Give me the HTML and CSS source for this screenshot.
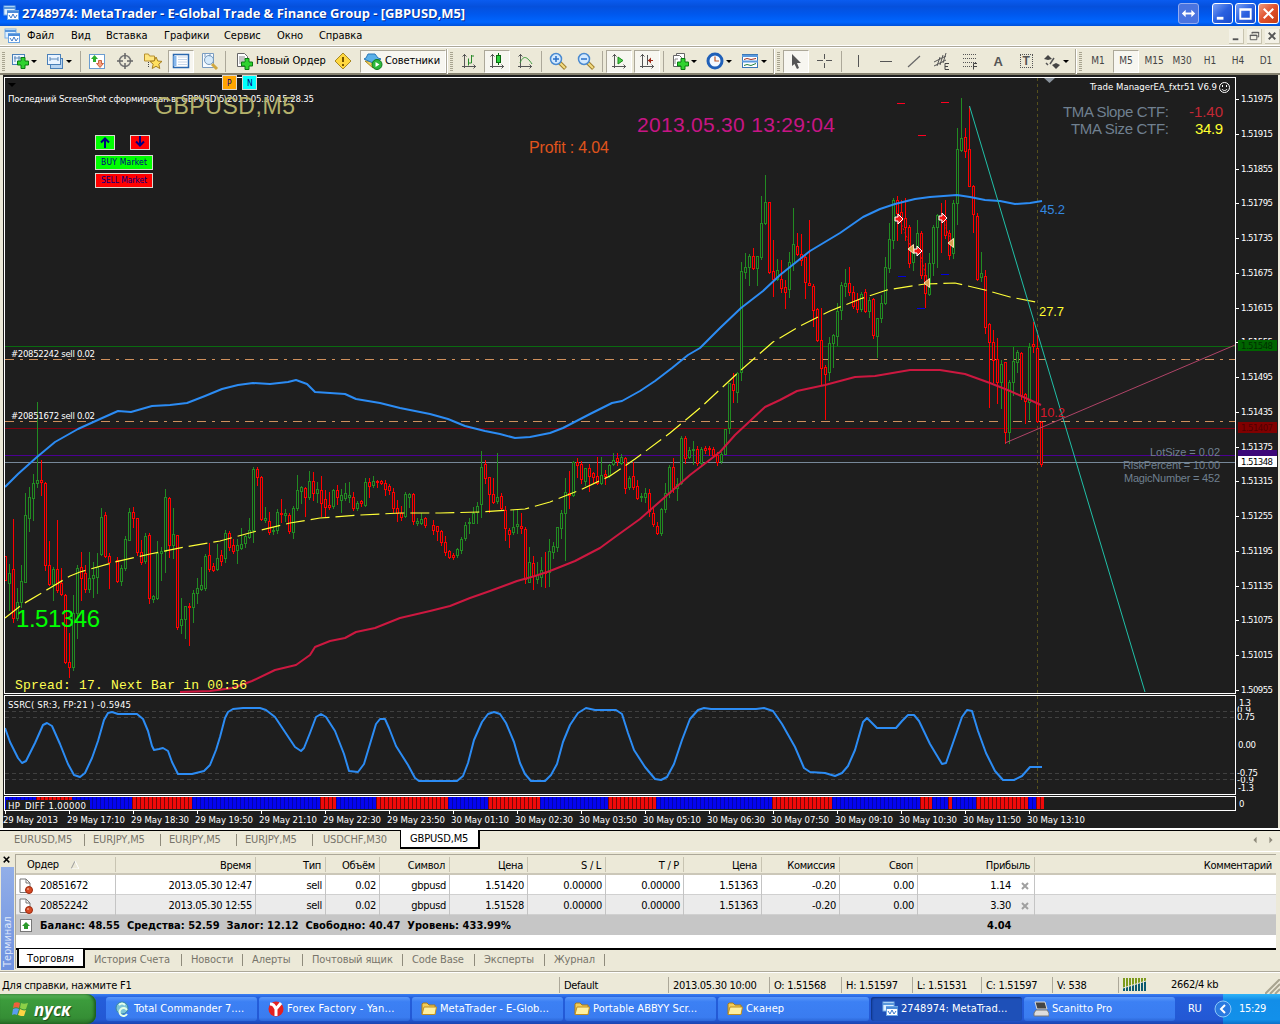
FILE: index.html
```html
<!DOCTYPE html>
<html lang="ru">
<head>
    <meta charset="UTF-8">
    <title>2748974: MetaTrader - E-Global Trade &amp; Finance Group - [GBPUSD,M5]</title>
    <link rel="stylesheet" href="styles.css">
</head>
<body>
    <svg class="defs">
        <symbol id="app" viewBox="0 0 16 16">
            <rect x="1" y="1" width="11" height="9" fill="#dff0ff" stroke="#7ab0e8"/>
            <path d="M1 3h11" stroke="#5a98dc" stroke-width="2"/>
            <rect x="4.500" y="5.500" width="11" height="9" fill="#fff" stroke="#6aa4e4"/>
            <path d="M4 7h12" stroke="#4c8cd8" stroke-width="2"/>
            <path d="M6 10l2 3 2-4 2 4 2-3" fill="none" stroke="#3a78c8"/>
        </symbol>
        <symbol id="plus" viewBox="0 0 12 12">
            <path d="M4 .5h4V4h3.500v4H8v3.500H4V8H.5V4H4z" fill="#2fd22f" stroke="#0a7a12"/>
        </symbol>
        <symbol id="folder" viewBox="0 0 16 14">
            <path d="M1 12V2l1-1h4l2 2h6v9z" fill="#f2cc58" stroke="#a87a18"/>
            <path d="M1 12.500L3 5h12.500l-1.500 7.500z" fill="#fff0a0" stroke="#c09020"/>
        </symbol>
        <symbol id="sheet" viewBox="0 0 14 16">
            <path d="M1 1h6l4 4v9.500H1z" fill="#fff" stroke="#777"/>
            <path d="M7 1v4h4" fill="none" stroke="#777"/>
            <circle cx="10" cy="12" r="3.500" fill="#d84a24" stroke="#9a2a10"/>
            <circle cx="9" cy="11" r="1" fill="#f6a080"/>
        </symbol>
        <symbol id="lens" viewBox="0 0 20 20">
            <path d="M11.500 11.500l6 6" stroke="#a08030" stroke-width="4"/>
            <path d="M12 12l5 5" stroke="#f4dc80" stroke-width="2"/>
            <circle cx="8" cy="8" r="5.500" fill="#d4eaff" stroke="#4a8ad0" stroke-width="1.500"/>
        </symbol>
        <symbol id="axes" viewBox="0 0 16 16">
            <path d="M3.500 1v14M1 13.500h14M1.500 3.500l2-2 2 2M12.500 11.500l2 2-2 2" fill="none" stroke="#555"/>
        </symbol>
    </svg>

    <header class="titlebar">
        <svg class="ico16"><use href="#app"/></svg>
        <span class="title">2748974: MetaTrader - E-Global Trade &amp; Finance Group - [GBPUSD,M5]</span>
        <span class="winbtn wide"><svg viewBox="0 0 20 20"><path d="M5 10h10" stroke="#fff" stroke-width="2"/><path d="M3 10l4-4v8zM17 10l-4-4v8z" fill="#fff"/></svg></span>
        <span class="winbtn"><svg viewBox="0 0 20 20"><path d="M4 15h7" stroke="#fff" stroke-width="3"/></svg></span>
        <span class="winbtn"><svg viewBox="0 0 20 20"><path d="M4.500 5.500h11v10h-11zM4 6h12" fill="none" stroke="#fff" stroke-width="2"/></svg></span>
        <span class="winbtn close"><svg viewBox="0 0 20 20"><path d="M5 5l10 10M15 5L5 15" stroke="#fff" stroke-width="2.200"/></svg></span>
    </header>

    <nav class="menubar">
        <svg class="ico16"><use href="#app"/></svg>
        <span class="m1">Файл</span><span class="m2">Вид</span><span class="m3">Вставка</span><span class="m4">Графики</span><span class="m5">Сервис</span><span class="m6">Окно</span><span class="m7">Справка</span>
        <div class="mdi">
            <span><svg viewBox="0 0 15 15"><path d="M4 11h6" stroke="#555" stroke-width="2"/></svg></span>
            <span><svg viewBox="0 0 15 15"><path d="M5.500 5V3.500h7v5H11M3.500 6.500h7v5h-7zM3 7h8M5 4h8" fill="none" stroke="#555"/></svg></span>
            <span><svg viewBox="0 0 15 15"><path d="M4 4l7 7M11 4l-7 7" stroke="#555" stroke-width="2"/></svg></span>
        </div>
    </nav>

    <div class="toolbar">
        <i class="grip first"></i>
        <span class="drop"><svg viewBox="0 0 20 20"><rect x="2.500" y="3.500" width="12" height="10" fill="#eaf4ff" stroke="#4a80b8"/><path d="M5 5v6M4 7h7M9 5v6" stroke="#5a88b8"/><use href="#plus" x="7" y="6" width="12" height="12"/></svg></span>
        <span class="drop"><svg viewBox="0 0 20 20"><rect x="5.500" y="7.500" width="12" height="10" fill="#b8d4f0" stroke="#4a80b8"/><rect x="2.500" y="3.500" width="13" height="10" fill="#eaf4ff" stroke="#4a80b8"/><path d="M5 8h8M5 6v4M13 6v4" stroke="#5a88b8"/></svg></span>
        <i class="sep"></i>
        <span class="btn"><svg viewBox="0 0 20 20"><rect x="2.500" y="3.500" width="15" height="14" fill="#fff" stroke="#6a9cd0"/><path d="M7.500 4l3.500 4H9v3H6V8H4z" fill="#2cae2c"/><path d="M13 16.500l-3.500-4h2v-3h3v3h2z" fill="#f8a080" stroke="#c04a20" stroke-width=".8"/></svg></span>
        <span class="btn"><svg viewBox="0 0 20 20"><circle cx="10" cy="10" r="5.500" fill="none" stroke="#777" stroke-width="1.500"/><path d="M10 2v6M10 12v6M2 10h6M12 10h6" stroke="#666" stroke-width="1.500"/></svg></span>
        <span class="btn"><svg viewBox="0 0 20 20"><path d="M1.500 10V3h4l1 2h5v5z" fill="#ffe680" stroke="#b89030"/><path d="M5.500 11v6" stroke="#444" stroke-dasharray="1 1"/><path d="M13 6l1.800 4 4.200.4-3.200 2.800 1 4.300-3.800-2.200-3.800 2.200 1-4.300L7 10.400l4.200-.4z" fill="#ffe060" stroke="#a88020"/></svg></span>
        <span class="btn on"><svg viewBox="0 0 20 20"><rect x="2.500" y="3.500" width="15" height="13" fill="#fff" stroke="#2a68b0" stroke-width="1.500"/><path d="M4 5v10" stroke="#88b8ec" stroke-width="3"/><path d="M7 6h9M7 8.500h9M7 11h9M7 13.500h9" stroke="#c4d4e8"/></svg></span>
        <span class="btn"><svg viewBox="0 0 20 20"><path d="M3.500 2.500h11v14h-11zM6 2v4M11 2v4" fill="#f6fbff" stroke="#7a9cc0"/><path d="M13 13l5 5" stroke="#d0a840" stroke-width="3"/><circle cx="10" cy="9" r="4.500" fill="#c8e2fa" fill-opacity=".7" stroke="#7898b8"/></svg></span>
        <i class="sep"></i>
        <span class="btn order"><svg viewBox="0 0 20 20"><path d="M3.500 2.500h7l3 3v10h-10z" fill="#fff" stroke="#666"/><path d="M5 6h6M5 8h6M5 10h5M5 12h3" stroke="#888"/><use href="#plus" x="7" y="7" width="12" height="12"/></svg>Новый Ордер</span>
        <span class="btn"><svg viewBox="0 0 20 20"><path d="M10 2l8 8-8 8-8-8z" fill="#ffd840" stroke="#a88820"/><path d="M10 6v5M10 13v2" stroke="#775500" stroke-width="2"/></svg></span>
        <span class="btn on experts"><svg viewBox="0 0 20 20"><path d="M2 10l8 7 7-6z" fill="#f0d060" stroke="#a88820"/><path d="M1 8l2-1 2-4h7l3 4 3 1-8 4z" fill="#5ab0e8" stroke="#2a78b8"/><circle cx="14" cy="13.500" r="5" fill="#2cb83c" stroke="#0e7a1c"/><path d="M12.500 11l4 2.500-4 2.500z" fill="#fff"/></svg>Советники</span>
        <i class="edge"></i><i class="grip"></i>
        <span class="btn"><svg viewBox="0 0 20 20"><use href="#axes" x="2" y="2" width="16" height="16"/><path d="M9.500 7.500v7M12.500 4v8M12 5h3M9.500 12h3" stroke="#2a8a2a"/></svg></span>
        <span class="btn on"><svg viewBox="0 0 20 20"><use href="#axes" x="2" y="2" width="16" height="16"/><path d="M11.500 2v12" stroke="#0a6a10"/><rect x="9.500" y="4.500" width="4" height="7" fill="#2cd03c" stroke="#0a6a10"/></svg></span>
        <span class="btn"><svg viewBox="0 0 20 20"><use href="#axes" x="2" y="2" width="16" height="16"/><path d="M5 12c3-7 6-8 12 1" fill="none" stroke="#3a9a3a"/></svg></span>
        <i class="sep"></i>
        <span class="btn"><svg viewBox="0 0 20 20"><use href="#lens" width="20" height="20"/><path d="M5 8h6M8 5v6" stroke="#2a70c8" stroke-width="1.500"/></svg></span>
        <span class="btn"><svg viewBox="0 0 20 20"><use href="#lens" width="20" height="20"/><path d="M5 8h6" stroke="#2a70c8" stroke-width="1.500"/></svg></span>
        <i class="sep"></i>
        <span class="btn on"><svg viewBox="0 0 20 20"><use href="#axes" x="2" y="2" width="16" height="16"/><path d="M9 6l5 3.500L9 13z" fill="#4cd04c" stroke="#1a8a1a"/></svg></span>
        <span class="btn on"><svg viewBox="0 0 20 20"><use href="#axes" x="2" y="2" width="16" height="16"/><path d="M10.500 4v10" stroke="#555"/><path d="M11 9.500h5" stroke="#a02818"/><path d="M11 9.500l3-3v6z" fill="#a02818"/></svg></span>
        <i class="sep wider"></i>
        <span class="drop"><svg viewBox="0 0 20 20"><path d="M6.500 2.500h8v12h-8z" fill="#fff" stroke="#666"/><path d="M3.500 4.500h6l2 2v9h-8z" fill="#fff" stroke="#666"/><path d="M5 13V8h3" fill="none" stroke="#888"/><use href="#plus" x="7" y="7" width="12" height="12"/></svg></span>
        <span class="drop"><svg viewBox="0 0 20 20"><circle cx="10" cy="10" r="7" fill="#f4faff" stroke="#2060b8" stroke-width="3"/><path d="M10 5.500V10h4" fill="none" stroke="#c05828" stroke-width="1.200"/></svg></span>
        <span class="drop"><svg viewBox="0 0 20 20"><rect x="2.500" y="3.500" width="15" height="13" fill="#fff" stroke="#3a78b8"/><path d="M2 5h16M2 10.500h16" stroke="#5a9ade" stroke-width="2"/><path d="M4 8.500l3-1 4 1 5-1" fill="none" stroke="#a03020"/><path d="M4 14.500l3-1 4 1 5-2" fill="none" stroke="#208040"/></svg></span>
        <i class="edge"></i><i class="grip"></i>
        <span class="btn on"><svg viewBox="0 0 20 20"><path d="M6 3l9 9h-4l2 5-2 1-2.500-5L6 15z" fill="#555"/></svg></span>
        <span class="btn"><svg viewBox="0 0 20 20"><path d="M10.500 3v5M10.500 12v5M3 9.500h6M12 9.500h6" stroke="#555"/></svg></span>
        <i class="sep wide6"></i>
        <span class="btn"><svg viewBox="0 0 20 20"><path d="M10.500 4v12" stroke="#555"/></svg></span>
        <span class="btn"><svg viewBox="0 0 20 20"><path d="M4 10.500h12" stroke="#555"/></svg></span>
        <span class="btn"><svg viewBox="0 0 20 20"><path d="M4 16L16 5" stroke="#666" stroke-width="1.200"/></svg></span>
        <span class="btn"><svg viewBox="0 0 20 20"><path d="M2 11l12-6M2 15l12-6M5 15l3-9M8 14l3-10M11 12l3-10" stroke="#555"/><path d="M17 12.500h-4v6h4M13 15.500h3" fill="none" stroke="#444"/></svg></span>
        <span class="btn"><svg viewBox="0 0 20 20"><path d="M3 3.500h14M3 7.500h14M3 11.500h14M3 15.500h9" stroke="#555" stroke-dasharray="1 1"/><path d="M17 12.500h-3.500v6M14 15.500h3" fill="none" stroke="#444"/></svg></span>
        <span class="btn letter">A</span>
        <span class="btn letter"><b class="tbox">T</b></span>
        <span class="drop shapes"><svg viewBox="0 0 20 20"><path d="M2 8l4-4 4 4-4 1zM10 14l4-2 4 2-4 4z" fill="#444"/><path d="M4 12l2 2M12 7l-4 6" stroke="#555" stroke-width="1.500"/></svg></span>
        <i class="edge"></i><i class="grip"></i>
        <span class="btn tf">M1</span><span class="btn tf on">M5</span><span class="btn tf">M15</span><span class="btn tf">M30</span><span class="btn tf">H1</span><span class="btn tf">H4</span><span class="btn tf">D1</span>
    </div>

    <main class="chart">
        <svg id="chart" viewBox="3 75 1275 753" width="1275" height="753">
            <g id="levels"></g>
            <g id="candles"></g>
            <g id="curves"></g>
            <g id="markers"></g>
            <g id="hist"></g>
            <g class="frame">
                <path d="M4.500 693.500V77.500H1235.500V693.500zM4.500 794.500V695.500H1235.500V794.500zM4.500 810.500V796.500H1235.500V810.500z"/>
            </g>
            <path d="M1044 78h11l-5.500 5z" fill="#8a939c"/>
            <path d="M8 83h8l-4 4z" fill="#000"/>
            <g id="axis"></g>

            <text class="small" x="8" y="102" textLength="306">Последний ScreenShot сформирован в: GBPUSD\5\2013.05.30 15.28.35</text>
            <text class="arial symbol" x="155" y="114" textLength="140">GBPUSD,M5</text>
            <text class="arial clock" x="637" y="132" textLength="198">2013.05.30 13:29:04</text>
            <text class="arial profit" x="529" y="153" textLength="80">Profit : 4.04</text>
            <text class="arial price" x="16" y="627" textLength="84">1.51346</text>
            <text class="mono" x="15" y="689" textLength="232">Spread: 17. Next Bar in 00:56</text>
            <text class="small" x="11" y="357" textLength="84">#20852242 sell 0.02</text>
            <text class="small" x="11" y="419" textLength="84">#20851672 sell 0.02</text>
            <text class="small" x="1090" y="90" textLength="127">Trade ManagerEA_fxtr51 V6.9</text>
            <g fill="none" stroke="#fff"><circle cx="1224.500" cy="87.500" r="5"/><path d="M1222 89c1 2 4 2 5 0M1222.500 85v2M1226.500 85v2"/></g>
            <text class="arial tma" x="1063" y="117" textLength="106">TMA Slope CTF:</text>
            <text class="arial tma" x="1071" y="134" textLength="98">TMA Size CTF:</text>
            <text class="arial tma neg" x="1189" y="117" textLength="34">-1.40</text>
            <text class="arial tma pos" x="1195" y="134" textLength="28">34.9</text>
            <text class="arial band blue" x="1040" y="214" textLength="25">45.2</text>
            <text class="arial band yellow" x="1039" y="316" textLength="25">27.7</text>
            <text class="arial band red" x="1040" y="417" textLength="25">10.2</text>
            <text class="arial info" x="1150" y="456" textLength="70">LotSize = 0.02</text>
            <text class="arial info" x="1123" y="469" textLength="97">RiskPercent = 10.00</text>
            <text class="arial info" x="1124" y="482" textLength="96">MagicNumber = 452</text>
            <text class="small" x="8" y="708" textLength="123">SSRC( SR:3, FP:21 ) -0.5945</text>
            <rect x="6" y="800" width="84" height="10" fill="#1e1e1e"/>
            <text class="small" x="8" y="809" textLength="78">HP_DIFF 1.00000</text>

            <!-- trade buttons -->
            <g class="pad">
                <rect x="222.500" y="75.500" width="14" height="14" fill="#ffa500"/><text x="227" y="86">P</text>
                <rect x="242.500" y="75.500" width="14" height="14" fill="#00ffff"/><text x="247" y="86">N</text>
                <rect x="95.500" y="135.500" width="19" height="14" fill="#00ff00"/>
                <rect x="130.500" y="135.500" width="19" height="14" fill="#ff0000"/>
                <path d="M105 148v-9M101 142.500l4-4 4 4M140 136v9M136 141.500l4 4 4-4"/>
                <rect x="95.500" y="155.500" width="57" height="14" fill="#00ff00"/><text x="101" y="165" textLength="46">BUY Market</text>
                <rect x="95.500" y="173.500" width="57" height="14" fill="#ff0000"/><text x="101" y="183" textLength="46">SELL Market</text>
            </g>
        </svg>
    </main>

    <div class="charttabs">
        <span>EURUSD,M5</span><span>EURJPY,M5</span><span>EURJPY,M5</span><span>EURJPY,M5</span><span class="last">USDCHF,M30</span><span class="active">GBPUSD,M5</span>
        <svg class="scroll" viewBox="0 0 24 10"><path d="M4 1v8L0 5zM20 1v8l4-4z" fill="#8f8b7c"/></svg>
    </div>

    <section class="terminal">
        <aside>
            <svg viewBox="0 0 14 14"><path d="M4 3l6 6M10 3l-6 6" stroke="#000" stroke-width="1.600"/></svg>
            <div class="side"><span>Терминал</span></div>
        </aside>
        <div class="panel">
            <div class="row head">
                <span class="id">Ордер <svg viewBox="0 0 8 8"><path d="M0 8L4 0" stroke="#999"/><path d="M4 0l4 8H0" fill="none" stroke="#fff"/></svg></span><span>Время</span><span>Тип</span><span>Объём</span><span>Символ</span><span>Цена</span><span>S / L</span><span>T / P</span><span>Цена</span><span>Комиссия</span><span>Своп</span><span>Прибыль</span><span>Комментарий</span>
            </div>
            <div class="row">
                <span class="id"><svg><use href="#sheet"/></svg>20851672</span><span>2013.05.30 12:47</span><span>sell</span><span>0.02</span><span>gbpusd</span><span>1.51420</span><span>0.00000</span><span>0.00000</span><span>1.51363</span><span>-0.20</span><span>0.00</span><span class="gain">1.14<svg viewBox="0 0 8 8"><path d="M1 1l6 6M7 1L1 7"/></svg></span><span></span>
            </div>
            <div class="row alt">
                <span class="id"><svg><use href="#sheet"/></svg>20852242</span><span>2013.05.30 12:55</span><span>sell</span><span>0.02</span><span>gbpusd</span><span>1.51528</span><span>0.00000</span><span>0.00000</span><span>1.51363</span><span>-0.20</span><span>0.00</span><span class="gain">3.30<svg viewBox="0 0 8 8"><path d="M1 1l6 6M7 1L1 7"/></svg></span><span></span>
            </div>
            <div class="total">
                <svg viewBox="0 0 14 16"><rect x="1.500" y="1.500" width="11" height="12" fill="#fff" stroke="#777"/><path d="M7 4l4 4H9v3H5V8H3z" fill="#2a9a2a"/></svg>
                <b class="sum">Баланс: 48.55&nbsp; Средства: 52.59&nbsp; Залог: 12.12&nbsp; Свободно: 40.47&nbsp; Уровень: 433.99%</b>
                <b class="result">4.04</b>
            </div>
            <div class="tabs">
                <span class="active">Торговля</span><span class="w1">История Счета</span><span class="w2">Новости</span><span class="w3">Алерты</span><span class="w4">Почтовый ящик</span><span class="w5">Code Base</span><span class="w6">Эксперты</span><span class="w7">Журнал</span>
            </div>
        </div>
    </section>

    <footer class="status">
        <span class="help">Для справки, нажмите F1</span><span class="s1">Default</span><span class="s2">2013.05.30 10:00</span><span class="s3">O: 1.51568</span><span class="s4">H: 1.51597</span><span class="s5">L: 1.51531</span><span class="s6">C: 1.51597</span><span class="s7">V: 538</span>
        <span class="net"><svg viewBox="0 0 24 13"><path d="M0 6h24" stroke="#7c9a1c" stroke-width="12" stroke-dasharray="2 1"/><path d="M0 13V10L23 3v10z" fill="#0c5a70"/><path d="M2.500 0v13M5.500 0v13M8.500 0v13M11.500 0v13M14.500 0v13M17.500 0v13M20.500 0v13M0 10L23 3" stroke="#ece9d8"/></svg>2662/4 kb</span>
        <svg class="resize" viewBox="0 0 15 15"><path d="M0 15L15 0M5 15L15 5M10 15l5-5" stroke="#a8a490" stroke-width="2"/></svg>
    </footer>

    <div class="taskbar">
        <div class="start">
            <svg viewBox="0 0 18 18"><path d="M3 3c2-1 4-1 6 0L8 8C6 7 4 7 2 8z" fill="#f0603c"/><path d="M10 3c2 1 4 1 7 0l-2 6c-2 1-4 0-6-1z" fill="#8cd048"/><path d="M2 9c2-1 4-1 6 0l-2 6c-2-1-3-1-5 0z" fill="#5a9cf0"/><path d="M9 9c2 1 4 2 6 1l-2 6c-2 0-4 0-6-1z" fill="#fcd444"/></svg>
            <span>пуск</span>
        </div>
        <div class="tasks">
            <span><svg viewBox="0 0 16 16"><circle cx="7" cy="7" r="6" fill="#7cc4d8" stroke="#3a88a0"/><path d="M12 9a4 4 0 1 0 0 4M4 4c2-2 4-2 6 0" fill="none" stroke="#e4ffe8" stroke-width="2"/></svg>Total Commander 7....</span>
            <span class="yandex"><svg viewBox="0 0 16 16"><circle cx="8" cy="8" r="7.500" fill="#e42020"/><path d="M2 3c3 0 4 1 6 5l5-6M8 7v8" fill="none" stroke="#fff" stroke-width="3"/></svg>Forex Factory - Yan...</span>
            <span><svg><use href="#folder"/></svg>MetaTrader - E-Glob...</span>
            <span><svg><use href="#folder"/></svg>Portable ABBYY Scr...</span>
            <span><svg><use href="#folder"/></svg>Сканер</span>
            <span class="current"><svg><use href="#app"/></svg>2748974: MetaTrad...</span>
            <span><svg viewBox="0 0 16 16"><path d="M2 1h10l2 7H4z" fill="#444" stroke="#ddd"/><path d="M3 9h11l2 3v3H1v-3z" fill="#ddd" stroke="#777"/></svg>Scanitto Pro</span>
        </div>
        <span class="lang">RU</span>
        <div class="tray">
            <svg viewBox="0 0 18 18"><circle cx="9" cy="9" r="8" fill="#2a7ae0" stroke="#8cc8fa"/><path d="M11 5L7 9l4 4" fill="none" stroke="#fff" stroke-width="2"/></svg>
            <span>15:29</span>
        </div>
    </div>
    <script src="chart.js"></script>
</body>
</html>
```
FILE: styles.css
```css
* { box-sizing: border-box; }
body {
    margin: 0;
    width: 1280px;
    height: 1024px;
    overflow: hidden;
    background: #ece9d8;
    color: #000;
    font: 11px/14px "DejaVu Sans Condensed", "DejaVu Sans", sans-serif;
    font-stretch: condensed;
    letter-spacing: -0.3px;
    white-space: nowrap;
}
svg { display: block; flex: none; }
i { font-style: normal; }
.defs { width: 0; height: 0; position: absolute; }
.ico16 { width: 16px; height: 16px; }

/* title bar */
.titlebar {
    display: flex;
    align-items: center;
    height: 26px;
    padding: 0 1px 0 3px;
    background: linear-gradient(#0a5cf0 0, #0550dc 25%, #0058ee 55%, #0066ff 85%, #0050d8 100%);
}
.title {
    flex: 1;
    margin-left: 3px;
    color: #fff;
    font: bold 13px "Open Sans", "Noto Sans", sans-serif;
    letter-spacing: -0.05px;
    text-shadow: 1px 1px #0a2c8c;
}
.winbtn {
    width: 21px;
    height: 21px;
    margin-left: 2px;
    border: 1px solid #fff;
    border-radius: 3px;
    background: linear-gradient(135deg, #7aa0f4, #2a60e0 50%, #1a4ccc);
}
.winbtn svg { width: 19px; height: 19px; }
.winbtn.wide { margin-right: 11px; border-color: #94acf0; background: #4a74e0; }
.winbtn.close { background: linear-gradient(135deg, #f09a7c, #e0502c 50%, #c43c14); }

/* menu */
.menubar {
    display: flex;
    align-items: center;
    height: 20px;
    padding: 1px 0 0 4px;
    border-bottom: 1px solid #fff;
    letter-spacing: -0.05px;
}
.menubar .ico16 { margin-right: 7px; }
.m1 { width: 44px; }
.m2 { width: 35px; }
.m3 { width: 58px; }
.m4 { width: 60px; }
.m5 { width: 53px; }
.m6 { width: 42px; }
.m7 { flex: 1; }
.mdi { display: flex; gap: 3px; }
.mdi span { width: 15px; height: 15px; background: #f3f1e6; border-right: 1px solid #c8c4b0; border-bottom: 1px solid #c8c4b0; }
.mdi span svg { width: 14px; height: 14px; }

/* toolbar */
.toolbar {
    display: flex;
    align-items: center;
    height: 29px;
    padding-top: 2px;
    border-top: 1px solid #aca899;
    border-bottom: 2px solid #85816f;
    box-shadow: inset 0 1px #fff;
}
.grip {
    width: 3px;
    height: 19px;
    margin: 0 2px;
    background: repeating-linear-gradient(#a8a490 0 1px, transparent 1px 2px);
}
.grip.first { margin: 0 3px 0 2px; }
.edge { width: 2px; height: 25px; border-left: 1px solid #aca899; border-right: 1px solid #fff; }
.sep { width: 1px; height: 21px; margin: 0 2px; background: #aca899; }
.sep.wider { margin: 0 4px 0 2px; }
.sep.wide6 { margin: 0 2px 0 3px; }
.btn {
    display: flex;
    align-items: center;
    justify-content: center;
    width: 28px;
    height: 23px;
}
.btn svg, .drop svg { width: 20px; height: 20px; }
.btn.on {
    width: 26px;
    margin: 0 1px;
    border: 1px solid;
    border-color: #aca899 #fff #fff #aca899;
    background: #f7f6f0;
}
.order { width: 101px; justify-content: flex-start; padding-left: 6px; gap: 2px; letter-spacing: -0.02px; }
.btn.experts { width: 86px; margin-left: 3px; margin-right: 0; justify-content: flex-start; padding-left: 2px; gap: 2px; letter-spacing: -0.1px; }
.drop { display: flex; align-items: center; width: 35px; height: 23px; padding-left: 2px; }
.drop::after { content: ""; margin-left: 1px; border: 3px solid transparent; border-top: 3px solid #000; border-bottom: 0; }
.letter { color: #555; font: bold 13px "Liberation Sans", sans-serif; }
.tbox { width: 13px; height: 14px; border: 1px dotted #555; font-size: 12px; line-height: 12px; text-align: center; }
.tf { color: #444; font-size: 10px; letter-spacing: 0; }

/* chart */
.chart { height: 753px; padding-left: 3px; }
#chart { background: #1e1e1e; }
#levels, #candles, #axis, .frame, #hist { shape-rendering: crispEdges; }
.frame path { fill: none; stroke: #fff; }
.up { stroke: #228b22; fill: #1e1e1e; }
.down { stroke: #ff0000; fill: #1e1e1e; }
.wick.up { fill: #228b22; stroke: none; }
.wick.down { fill: #ff0000; stroke: none; }
.curve { fill: none; stroke-width: 2; stroke-linejoin: round; }
text { letter-spacing: 0; }
.small { fill: #fff; font: 9.5px "DejaVu Sans Condensed", "DejaVu Sans", sans-serif; font-stretch: condensed; }
.arial { font-family: "Liberation Sans", sans-serif; }
.symbol { font-size: 23px; fill: #b5b26c; }
.clock { font-size: 21px; fill: #c71585; }
.profit { font-size: 16px; fill: #e0541c; }
.price { font-size: 24px; fill: #00ff00; }
.mono { font: 13px "Liberation Mono", monospace; fill: #ffff50; }
.tma { font-size: 15px; fill: #708090; }
.tma.neg { fill: #c22835; }
.tma.pos { fill: #ffff30; }
.band { font-size: 13px; }
.band.blue { fill: #3388e0; }
.band.yellow { fill: #ffff30; }
.band.red { fill: #d8182c; }
.info { font-size: 11px; fill: #708090; }
.pad rect { stroke: #dcd8d0; stroke-width: 1; }
.pad text { font: 8.5px "DejaVu Sans Condensed", sans-serif; fill: #000080; }
.pad path { fill: none; stroke: #000080; stroke-width: 2; }

/* chart tabs */
.charttabs {
    display: flex;
    align-items: center;
    height: 26px;
    padding: 2px 7px 4px 2px;
    color: #77746a;
    background: linear-gradient(#fff 0 2px, #000 2px 3px, #ece9d8 3px 23px, #fff 23px 24px, #ece9d8 24px);
}
.charttabs span { width: 76px; height: 12px; padding-left: 8px; line-height: 12px; border-right: 1px solid #8f8b7c; letter-spacing: -0.15px; }
.charttabs span:first-child { width: 83px; padding-left: 12px; }
.charttabs .last { width: 86px; padding-left: 10px; border: 0; margin-right: 1px; }
.charttabs .active {
    width: 80px;
    height: 19px;
    padding-left: 9px;
    line-height: 18px;
    color: #000;
    background: #fff;
    border: 1px solid #000;
    border-width: 0 2px 2px 1px;
    align-self: flex-start;
}
.scroll { width: 20px; height: 8px; margin-left: auto; }

/* terminal */
.terminal { display: flex; height: 117px; }
aside { width: 15px; }
aside svg { width: 13px; height: 13px; }
.side {
    width: 13px;
    height: 103px;
    margin-left: 1px;
    background: linear-gradient(#6f92e0, #92aee8);
    color: #dde6fa;
    writing-mode: vertical-rl;
    transform: rotate(180deg);
    line-height: 13px;
    letter-spacing: -0.1px;
}
.side span { display: block; padding-top: 3px; }
.panel { width: 1261px; height: 115px; border-top: 1px solid #aca899; border-left: 1px solid #aca899; background: #fff; }
.row {
    display: grid;
    grid-template-columns: 100px 140px 70px 54px 70px 78px 78px 78px 78px 78px 78px 117px 241px;
    height: 20px;
    line-height: 21px;
    border-bottom: 1px solid #d0d0d0;
}
.row span { padding-right: 3px; text-align: right; border-right: 1px solid #c4c4c4; }
.row span:last-child { border-right: 0; }
.row .id { display: flex; align-items: center; gap: 7px; text-align: left; padding-left: 3px; }
.id svg { width: 14px; height: 16px; }
.row.alt { background: #ebebeb; }
.row.head { background: #ece9d8; border-bottom: 2px solid #cbc7b8; }
.row.head span { height: 15px; margin-top: 2px; padding-right: 4px; line-height: 17px; border-color: #c8c4b2; }
.row.head .id { padding-left: 11px; gap: 12px; }
.row.head svg { width: 8px; height: 8px; }
.row .gain { display: flex; align-items: center; justify-content: flex-end; gap: 10px; padding-right: 5px; }
.gain svg { width: 8px; height: 8px; stroke: #a0a0a0; stroke-width: 2; }
.total { display: flex; align-items: center; height: 20px; padding: 1px 0 0 3px; background: #c6c6c6; }
.total svg { width: 14px; height: 16px; }
.total b { letter-spacing: 0.03px; }
.sum { width: 947px; margin-left: 7px; }
.tabs {
    display: flex;
    align-items: center;
    height: 21px;
    margin-top: 13px;
    padding-left: 1px;
    border-top: 2px solid #000;
    background: #ece9d8;
    color: #77746a;
    letter-spacing: -0.1px;
}
.tabs span { height: 12px; padding-left: 9px; line-height: 12px; border-right: 1px solid #8f8b7c; }
.tabs .active { width: 68px; height: 19px; padding-left: 8px; line-height: 19px; align-self: flex-start; margin-top: -1px; color: #000; background: #fff; border: 2px solid #000; border-top: 0; }
.tabs .w1 { width: 97px; }
.tabs .w2 { width: 61px; }
.tabs .w3 { width: 60px; }
.tabs .w4 { width: 100px; }
.tabs .w5 { width: 72px; }
.tabs .w6 { width: 70px; }
.tabs .w7 { width: 60px; }

/* status line */
.status {
    display: flex;
    align-items: center;
    height: 23px;
    padding-top: 3px;
    border-top: 1px solid #aca899;
    box-shadow: inset 0 1px #fff;
}
.status span { height: 16px; line-height: 17px; padding-left: 4px; border-right: 1px solid #aca899; }
.status .help { width: 560px; padding-left: 2px; letter-spacing: -0.2px; }
.s1 { width: 109px; }
.s2 { width: 101px; }
.s3 { width: 72px; }
.s4 { width: 71px; }
.s5 { width: 69px; }
.s6 { width: 71px; }
.s7 { width: 66px; }
.status .net { display: flex; align-items: center; gap: 24px; width: 146px; border: 0; }
.net svg { width: 24px; height: 13px; }
.resize { width: 15px; height: 15px; align-self: flex-end; }

/* taskbar */
.taskbar {
    display: flex;
    align-items: center;
    height: 30px;
    color: #fff;
    background: linear-gradient(#3a80f4 0, #245edb 12%, #2358d4 85%, #1a44b0);
}
.start {
    display: flex;
    align-items: center;
    gap: 5px;
    width: 96px;
    height: 30px;
    padding-left: 11px;
    border-radius: 0 9px 9px 0;
    background: linear-gradient(#5cb45c 0, #3c9c3c 20%, #358e35 80%, #2a702a);
    box-shadow: inset -2px 0 3px #1c5c1c;
}
.start svg { width: 18px; height: 18px; }
.start span { font: italic bold 17px "Open Sans", "Noto Sans", sans-serif; letter-spacing: -0.1px; text-shadow: 1px 1px 1px #1c4c1c; }
.tasks { display: flex; gap: 2px; width: 1082px; padding-left: 10px; letter-spacing: 0.05px; }
.tasks span {
    display: flex;
    align-items: center;
    gap: 3px;
    width: 151px;
    height: 24px;
    padding-left: 9px;
    border-radius: 3px;
    background: linear-gradient(#5a98fa, #3c80f4 20%, #3a7cf0 85%, #2c68d8);
}
.tasks .yandex { letter-spacing: 0.25px; }
.tasks span.current { background: #1e50b8; box-shadow: inset 1px 1px 2px #0c3080; padding-left: 11px; }
.tasks svg { width: 16px; height: 16px; }
.lang { width: 35px; margin-left: 10px; }
.tray {
    display: flex;
    align-items: center;
    gap: 7px;
    flex: 1;
    height: 30px;
    background: linear-gradient(#30b4f8, #128ee8 20%, #1290ea 85%, #0c70c8);
}
.tray svg { width: 18px; height: 18px; margin-left: -9px; }
```
FILE: chart.js
```js
const NS = "http://www.w3.org/2000/svg";

// one bar every 4px: direction, high, body top, body bottom, low
const bars = `r556,556,580,580 g564,573,583,610 r519,569,618,622 g588,602,618,620 g565,581,602,607 g493,515,582,582 g487,497,518,531 g474,483,498,520 g402,480,483,487 r460,480,482,495
r482,483,565,570 r541,565,584,585 g567,569,584,600 r520,569,590,592 r568,583,594,595 r594,595,662,663 r633,662,667,677 g595,613,667,670 g565,568,613,638 r552,567,578,600
r565,573,589,592 g552,578,589,592 g562,575,578,597 g553,567,577,593 g508,517,554,555 r512,515,556,557 r553,556,562,588 - r557,560,581,582 g565,568,581,585
g536,539,568,570 g508,512,540,540 r507,512,518,527 r518,518,552,555 r540,552,562,564 g533,536,561,563 r533,535,598,603 g595,596,599,602 g541,553,598,599 g547,551,553,580
g489,497,551,572 r497,498,545,557 g508,534,545,558 r535,535,627,629 g598,619,625,633 g606,606,619,638 r603,606,607,645 g590,593,607,622 g578,588,593,603 g567,585,589,590
g554,556,588,590 r543,555,569,571 r563,566,570,571 g544,558,569,570 r550,555,561,565 g530,533,558,562 r531,533,547,550 r539,545,551,553 g539,545,550,563 g528,544,548,549
g535,536,543,547 g518,530,537,538 g467,469,530,542 r467,469,477,485 r476,477,519,520 g507,518,520,522 r512,521,532,534 g527,530,531,534 g509,512,530,533 r499,513,514,522
g509,513,515,521 r513,515,531,533 g506,508,532,538 g475,490,508,510 g486,487,491,503 r487,488,497,516 g471,481,497,499 r472,481,493,500 g482,489,493,502 r476,490,503,516
r490,499,507,517 r492,505,507,509 g489,490,506,508 r485,490,497,504 g489,495,500,512 g483,493,498,500 g482,495,497,502 r492,497,508,510 g501,503,508,510 r500,501,503,506
g478,482,505,506 r478,482,486,497 g476,481,485,487 r480,481,482,487 r480,481,483,484 r480,483,489,495 r484,486,490,494 r488,492,508,512 r500,508,513,521 r506,513,517,520
g492,494,516,517 g493,494,497,507 r493,494,521,524 g518,521,523,525 g513,519,523,524 r517,518,525,527 - r520,525,530,534 r526,526,531,540 r530,531,542,545
r536,542,552,555 r550,551,557,558 r553,555,557,559 g548,549,555,557 g537,539,550,553 g522,525,538,540 g518,522,523,533 g507,513,523,523 g502,506,512,523 g451,467,504,517
r460,464,478,483 r477,477,494,512 r478,494,502,503 g453,497,501,503 r493,496,508,510 r506,510,528,540 r528,530,534,547 g510,527,532,534 g510,524,526,533 r513,526,528,533
r527,529,579,583 g547,562,582,582 r556,563,576,589 g562,575,579,583 g557,570,577,586 r552,572,573,587 g539,551,572,586 g542,546,552,558 g527,527,547,551 g510,513,528,538
g478,492,513,560 r471,493,495,508 g461,462,495,496 r458,462,465,477 r461,464,479,483 g468,468,481,485 r464,468,476,491 r472,473,477,482 r457,476,483,484 g457,475,483,484
r470,474,476,484 g464,465,475,477 g453,460,464,465 r453,458,461,465 g454,457,463,464 r457,458,488,493 g476,478,487,489 r462,476,487,489 r480,486,498,499 g493,496,497,501
g488,493,497,502 r489,493,511,516 r508,513,524,526 r522,526,533,534 g508,509,533,535 g483,493,509,512 g465,467,493,497 r458,467,488,492 g478,484,488,500 g436,438,483,484
r436,438,458,463 g447,450,457,458 g441,449,450,464 r446,449,463,465 g447,449,463,465 r446,448,450,453 r446,448,449,455 r447,449,455,457 r452,455,462,465 g452,454,461,463
g429,429,454,454 g383,383,428,433 r373,384,390,402 g372,373,392,402 g262,271,372,380 g253,267,272,278 g254,256,267,285 r248,256,268,269 g256,256,268,285 g196,223,257,259
g175,202,223,224 r202,202,272,273 r240,271,279,296 g259,270,279,280 r260,279,288,292 r280,287,292,308 g252,262,289,297 g208,244,263,270 r233,246,254,255 r234,254,260,265
r255,257,282,298 r220,283,285,285 r284,286,310,326 r308,309,340,341 r308,340,368,384 r365,367,374,419 g337,343,372,380 g334,335,343,367 g303,311,336,345 g282,285,310,319
g269,283,286,296 r267,283,292,295 r286,292,306,308 r293,300,309,312 g292,294,309,311 r289,292,311,312 g297,300,311,317 r298,299,335,338 g318,318,336,357 g295,303,318,322
g257,267,303,304 g223,239,268,272 g198,200,240,248 r196,200,213,240 r200,212,220,233 r198,218,227,240 r225,227,263,267 g250,253,262,270 g220,233,253,255 r231,233,275,278
r263,275,293,307 g253,263,294,295 g225,227,263,275 g214,215,227,267 r203,217,218,252 r200,220,235,238 r230,233,255,259 g200,203,253,258 g128,149,203,224 g98,138,150,151
r128,137,151,157 r106,149,186,186 r185,186,214,232 r213,216,279,280 g252,273,277,281 r270,276,327,333 r323,324,342,407 r330,342,360,382 r338,359,382,403 g360,364,382,408
r362,362,432,443 g380,382,432,443 g347,361,382,395 g350,352,362,372 r352,353,395,399 r393,394,401,423 g343,347,402,419 r322,344,346,352 r335,348,421,422 r421,422,464,466`.split(/\s+/);

const upper = "5,487 15,477 18,474 37,457 55,442 78,429 100,419 118,411 131,412 152,406 170,405 187,403 205,396 222,389 238,385 253,383 270,384 288,382 296,380 307,384 315,392 345,394 356,399 380,403 400,408 430,414 448,419 465,426 485,431 500,434 515,438 530,437 550,433 563,428 590,414 612,403 622,401 640,391 655,381 672,368 688,355 700,348 720,328 741,308 763,291 780,275 810,251 840,233 863,217 880,209 895,204 915,199 930,197 957,195 970,197 985,200 1000,201 1015,204 1030,203 1042,201";
const middle = "5,618 23,604 50,588 70,576 80,572 115,562 150,554 185,547 220,541 253,532 290,523 320,518 360,515 400,513 440,513 480,512 525,509 550,502 580,490 610,476 635,459 670,433 700,408 741,370 773,342 800,326 830,311 860,299 887,290 925,284 955,283 985,290 1010,297 1041,303";
const lower = "180,692 210,691 233,688 252,681 275,670 296,665 310,655 315,647 330,641 345,638 356,632 375,628 400,618 430,611 450,606 470,598 490,591 517,581 535,576 550,571 575,561 600,548 615,537 640,519 665,497 690,475 720,452 735,435 750,421 765,407 780,400 797,391 825,385 855,377 875,376 910,370 940,370 965,374 990,383 1010,391 1041,405";
const ssrc = "5,728 10,742 18,758 22,763 26,761 35,743 43,725 47,723 52,726 60,744 68,764 74,775 80,777 85,773 92,758 98,741 104,720 108,713 112,712 118,714 137,714 143,719 148,731 152,746 154,750 159,749 163,748 168,751 172,762 178,774 192,774 204,771 210,765 216,750 220,737 225,718 228,712 233,709 243,708 260,708 266,710 275,717 285,732 295,747 301,751 304,748 310,733 316,717 321,714 326,717 335,731 344,754 349,771 358,772 364,764 370,744 376,724 380,719 385,719 389,728 396,746 408,765 415,778 419,781 457,781 463,776 468,763 474,740 482,722 488,714 494,712 500,714 506,723 514,742 520,763 525,774 531,781 545,781 551,775 557,764 563,742 570,725 578,713 586,708 595,710 616,710 622,714 628,733 634,750 645,767 655,779 661,780 667,777 674,764 682,740 690,719 698,710 704,708 711,709 756,709 764,708 773,711 782,724 795,747 804,768 810,772 825,773 835,776 842,773 848,766 855,750 863,722 867,718 871,722 877,728 896,728 902,721 908,715 914,715 919,721 930,744 942,764 946,763 954,740 962,717 967,710 972,711 978,731 986,753 995,771 1003,780 1014,780 1022,776 1030,767 1042,767";

function add(group, tag, attrs, text) {
    const el = document.createElementNS(NS, tag);
    for (const key in attrs) el.setAttribute(key, attrs[key]);
    if (text) el.textContent = text;
    document.getElementById(group).appendChild(el);
}

function line(group, x1, y1, x2, y2, stroke, dash) {
    add(group, "line", { x1, y1, x2, y2, stroke, "stroke-dasharray": dash || "none" });
}

// horizontal levels
line("levels", 5, 346.5, 1235, 346.5, "#0a6a10");
line("levels", 5, 359.5, 1235, 359.5, "#d0905c", "9 6 3 6");
line("levels", 5, 421.5, 1235, 421.5, "#d0905c", "9 6 3 6");
line("levels", 5, 428.5, 1235, 428.5, "#800010");
line("levels", 5, 455.5, 1235, 455.5, "#4b0092");
line("levels", 5, 462.5, 1235, 462.5, "#778899");
line("levels", 1037.5, 78, 1037.5, 793, "#55501c", "3 3");
[711.5, 717.5, 773.5, 779.5].forEach(y => line("levels", 5, y, 1235, y, "#404040", "4 3"));

bars.forEach((bar, i) => {
    if (bar === "-") return;
    const x = 5 + i * 4;
    const [high, top, bottom, low] = bar.slice(1).split(",").map(Number);
    const cls = bar[0] === "g" ? "up" : "down";
    add("candles", "rect", { class: "wick " + cls, x, y: high, width: 1, height: low - high + 1 });
    add("candles", "rect", { class: cls, x: x - 0.5, y: top + 0.5, width: 2, height: Math.max(bottom - top, 1) });
});

add("curves", "polyline", { class: "curve", points: upper, stroke: "#2c8cf4" });
add("curves", "polyline", { class: "curve", points: lower, stroke: "#cc1840" });
add("curves", "polyline", { class: "curve", points: middle, stroke: "#ffff38", style: "stroke-width:1.2", "stroke-dasharray": "19 6" });
add("curves", "polyline", { class: "curve", points: ssrc, stroke: "#2c8cf4" });
line("curves", 969.5, 106, 1145, 692, "#20c0a8");
line("curves", 1005, 443, 1235, 345, "#b04468");

// entries and exits
line("markers", 900, 221, 911, 247, "#e01010", "2 2");
line("markers", 920, 253, 927, 280, "#e01010", "2 2");
line("markers", 943, 220, 951, 241, "#e01010", "2 2");
[[899, 219], [918, 251], [943, 218]].forEach(([x, y]) =>
    add("markers", "path", { d: `M${x - 4} ${y - 2}h3v-3l5 5-5 5v-3h-3z`, fill: "#f01818", stroke: "#fff" }));
[[911, 249], [927, 283], [951, 243]].forEach(([x, y]) =>
    add("markers", "path", { d: `M${x - 3} ${y}l5.5-4.500v9z`, fill: "#d8a050", stroke: "#f8e0b0" }));
[[897, 103], [918, 135], [941, 102]].forEach(([x, y]) => line("levels", x, y + 0.5, x + 8, y + 0.5, "#ff0020"));
[[898, 276], [941, 274], [917, 308]].forEach(([x, y]) => line("levels", x, y + 0.5, x + 8, y + 0.5, "#0000e0"));

// HP_DIFF strip
const reds = [[36, 71], [132, 191], [320, 335], [376, 446], [488, 539], [608, 654], [772, 831], [920, 931], [948, 951], [976, 1027], [1036, 1044]];
for (let x = 4; x < 1043; x += 4) {
    const red = reds.some(([from, to]) => x >= from && x < to);
    add("hist", "rect", { x: x + 1, y: 797, width: 3, height: 12, fill: red ? "#f00a0a" : "#0404f0" });
    add("hist", "rect", { x, y: 797, width: 1, height: 12, fill: red ? "#780808" : "#0404a8" });
}

// price scale
for (let i = 0; i < 18; i++) {
    const y = Math.round(99 + i * 34.76);
    line("axis", 1236, y + 0.5, 1239, y + 0.5, "#fff");
    add("axis", "text", { class: "small", x: 1241, y: y + 3, textLength: 32 }, (1.51975 - i * 0.0006).toFixed(5));
}
[["1.51548", 340, "#006400", "#003000"], ["1.51407", 422, "#800000", "#500000"], ["", 450, "#3c0878", "#000"], ["1.51348", 456, "#fff", "#000"]].forEach(([label, y, bg, fg]) => {
    add("axis", "rect", { x: 1238, y, width: 39, height: y === 450 ? 6 : 11, fill: bg });
    add("axis", "text", { class: "small", x: 1241, y: y + 9, textLength: 32, style: "fill:" + fg }, label);
});
[["0.9", 1237, 713, 14], ["1.3", 1239, 706, 12], ["0.75", 1237, 720, 18], ["0.00", 1238, 748, 18], ["-0.9", 1237, 783, 17], ["-0.75", 1237, 776, 21], ["-1.3", 1238, 791, 16], ["0", 1239, 807, 5]].forEach(([label, x, y, w]) => {
    add("axis", "rect", { x, y: y - 8, width: 22, height: 9, fill: "#1e1e1e" });
    add("axis", "text", { class: "small", x, y, textLength: w }, label);
});

// time scale
const times = ["29 May 2013", "29 May 17:10", "29 May 18:30", "29 May 19:50", "29 May 21:10", "29 May 22:30", "29 May 23:50", "30 May 01:10", "30 May 02:30", "30 May 03:50", "30 May 05:10", "30 May 06:30", "30 May 07:50", "30 May 09:10", "30 May 10:30", "30 May 11:50", "30 May 13:10"];
times.forEach((time, i) => {
    const x = 5 + i * 64;
    line("axis", x + 0.5, 811, x + 0.5, 814, "#fff");
    add("axis", "text", { class: "small", x: x - 2, y: 823, textLength: i ? 58 : 55 }, time);
});
```
